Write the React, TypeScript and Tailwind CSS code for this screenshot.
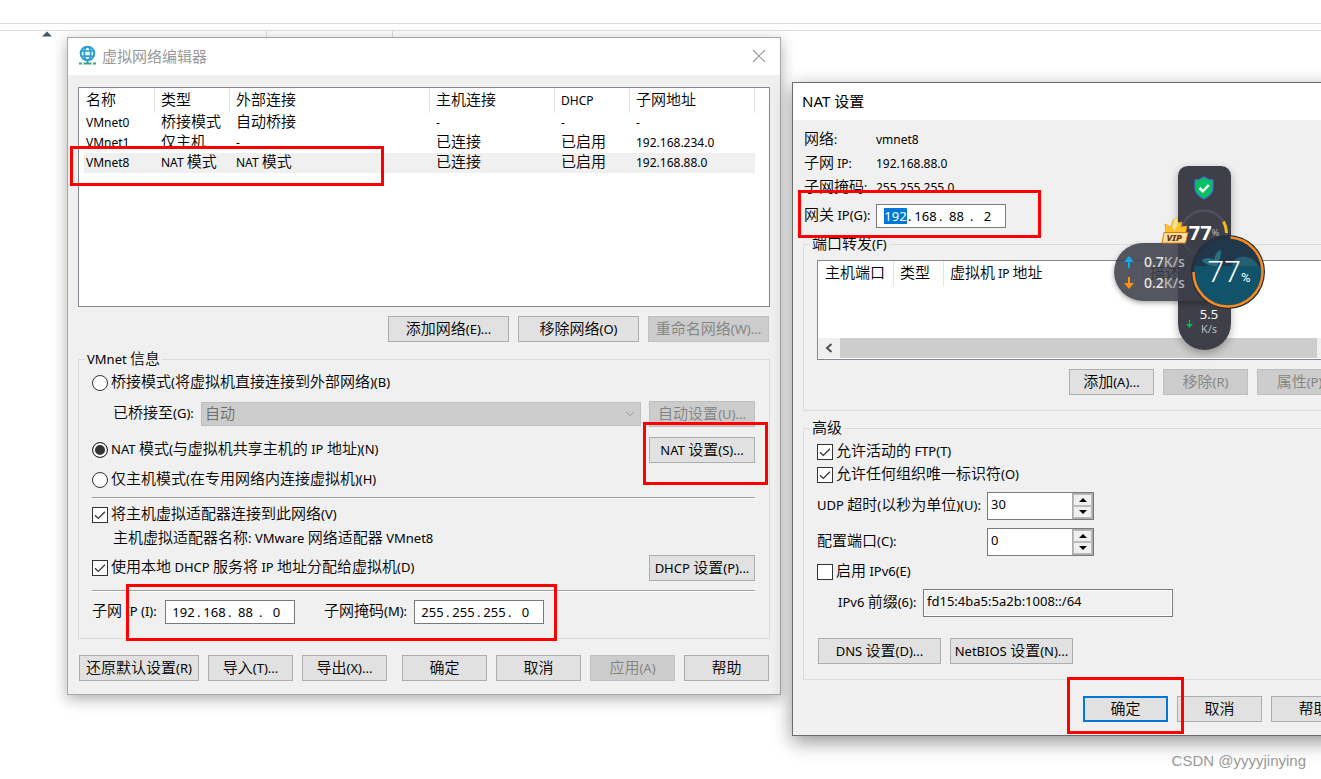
import { useState } from 'react';
import type { ReactNode } from 'react';

import clsx from 'clsx';
import { ChevronDown } from 'lucide-react';

const FONT = "font-['Noto_Sans','Noto_Sans_CJK_SC',sans-serif]";

/** Chinese runs are drawn larger and lighter than the latin text around them. */
function Txt({ children }: { children: string }) {
	return (
		<span className="whitespace-pre">
			{children.split(/([\u4e00-\u9fff]+)/).map((part, i) =>
				i % 2 === 1 ? (
					<span key={i} className="font-['Noto_Sans_CJK_SC',sans-serif] text-[15px] leading-4 font-[350]">
						{part}
					</span>
				) : (
					part
				)
			)}
		</span>
	);
}

function WinButton({
	children,
	className,
	disabled,
	primary,
}: {
	children: string;
	className?: string;
	disabled?: boolean;
	primary?: boolean;
}) {
	return (
		<button
			type="button"
			disabled={disabled}
			className={clsx(
				'flex h-[26px] shrink-0 items-center justify-center leading-5',
				disabled && 'border border-[#bfbfbf] bg-[#cccccc] text-[#838383]',
				primary && 'border-2 border-[#0078d7] bg-[#e1e1e1]',
				!disabled && !primary && 'border border-[#adadad] bg-[#e1e1e1]',
				className
			)}
		>
			<Txt>{children}</Txt>
		</button>
	);
}

function Radio({ label, checked, onChange }: { label: string; checked: boolean; onChange: () => void }) {
	return (
		<label className="flex items-center gap-[3px]">
			<input
				type="radio"
				name="mode"
				checked={checked}
				onChange={onChange}
				className="h-4 w-4 appearance-none rounded-full border border-[#333] bg-white checked:bg-[#333] checked:shadow-[inset_0_0_0_2px_#fff]"
			/>
			<Txt>{label}</Txt>
		</label>
	);
}

function Check({ label, defaultChecked }: { label: string; defaultChecked?: boolean }) {
	return (
		<label className="flex items-center gap-[3px]">
			<span className="grid h-4 w-4">
				<input
					type="checkbox"
					defaultChecked={defaultChecked}
					className="peer col-start-1 row-start-1 h-4 w-4 appearance-none border border-[#333] bg-white"
				/>
				<svg
					viewBox="0 0 16 16"
					className="pointer-events-none invisible col-start-1 row-start-1 h-4 w-4 peer-checked:visible"
				>
					<path d="M3 8.2 6.3 11.4 13 4.8" fill="none" stroke="#333" strokeWidth="1.3" />
				</svg>
			</span>
			<Txt>{label}</Txt>
		</label>
	);
}

function IpField({ label, parts, selected }: { label: string; parts: string[]; selected?: number }) {
	return (
		<div role="group" aria-label={label} className="flex h-6 w-[130px] shrink-0 items-center border border-[#7a7a7a] bg-white pl-1">
			{parts.map((part, i) => (
				<span key={i} className="flex items-center">
					<input
						type="text"
						aria-label={`${label} ${i + 1}`}
						defaultValue={part}
						className={clsx(
							'h-4 text-center text-[13px] leading-4',
							selected === i ? 'mr-px ml-[3px] w-[23px] bg-[#0078d7] text-white' : 'w-[27px]'
						)}
					/>
					{i < 3 && <span className="w-1 leading-4">.</span>}
				</span>
			))}
		</div>
	);
}

function Spinner({ id, value }: { id: string; value: number }) {
	const [current, setCurrent] = useState(value);

	return (
		<div className="flex h-7 w-[107px] border border-[#7a7a7a] bg-white">
			<input
				id={id}
				type="text"
				value={current}
				onChange={(e) => setCurrent(Number(e.target.value) || 0)}
				className="h-[22px] w-[84px] pl-[3px] leading-5"
			/>
			<div className="flex w-[21px] flex-col border border-[#adadad] bg-[#f0f0f0]">
				<button
					type="button"
					aria-label="增加"
					onClick={() => setCurrent(current + 1)}
					className="flex h-3 items-center justify-center border border-[#bbb]"
				>
					<svg viewBox="0 0 8 4" className="h-1 w-2">
						<path d="M0 4 4 0l4 4z" />
					</svg>
				</button>
				<button
					type="button"
					aria-label="减少"
					onClick={() => setCurrent(current - 1)}
					className="flex h-3 items-center justify-center border border-[#bbb]"
				>
					<svg viewBox="0 0 8 4" className="h-1 w-2">
						<path d="M0 0 4 4l4-4z" />
					</svg>
				</button>
			</div>
		</div>
	);
}

function Divider({ className }: { className: string }) {
	return <hr className={clsx('mr-px h-[2px] border-0 border-t border-[#a0a0a0] bg-white', className)} />;
}

function Group({ title, className, children }: { title: string; className: string; children: ReactNode }) {
	return (
		<fieldset className={clsx('border border-[#dcdcdc] px-[13px]', className)}>
			<legend className="-ml-[7px] h-5 px-[2px] leading-5">
				<Txt>{title}</Txt>
			</legend>
			{children}
		</fieldset>
	);
}

const NETWORKS = [
	['VMnet0', '桥接模式', '自动桥接', '-', '-', '-'],
	['VMnet1', '仅主机', '-', '已连接', '已启用', '192.168.234.0'],
	['VMnet8', 'NAT 模式', 'NAT 模式', '已连接', '已启用', '192.168.88.0'],
];

function NetworkTable() {
	return (
		<div className="h-[220px] border border-[#828790] bg-white">
			<table className="w-full table-fixed border-separate border-spacing-0 text-left text-xs leading-5">
				<colgroup>
					<col className="w-[76px]" />
					<col className="w-[75px]" />
					<col className="w-[200px]" />
					<col className="w-[125px]" />
					<col className="w-[75px]" />
					<col className="w-[125px]" />
					<col />
				</colgroup>
				<thead>
					<tr>
						{['名称', '类型', '外部连接', '主机连接', 'DHCP', '子网地址'].map((head, i) => (
							<th
								key={head}
								className={clsx(
									'h-[25px] border-r border-[#e5e5e5] p-0 font-normal',
									i === 0 ? 'pl-[7px]' : 'pl-[6px]'
								)}
							>
								<Txt>{head}</Txt>
							</th>
						))}
						<td />
					</tr>
				</thead>
				<tbody>
					{NETWORKS.map((row) => (
						<tr key={row[0]}>
							{row.map((cell, i) => (
								<td
									key={i}
									className={clsx(
										'h-5 p-0',
										i === 0 ? 'border-l-[5px] border-white pl-[2px]' : 'pl-[6px]',
										row[0] === 'VMnet8' && 'bg-[#f0f0f0]'
									)}
								>
									<div className="h-5 leading-5">
										<Txt>{cell}</Txt>
									</div>
								</td>
							))}
							<td />
						</tr>
					))}
				</tbody>
			</table>
		</div>
	);
}

function GlobeIcon() {
	return (
		<svg viewBox="0 0 17 20" className="h-5 w-[17px]" fill="none">
			<circle cx="8.5" cy="7.5" r="6.8" fill="#eaf7fd" stroke="#2a9fd0" strokeWidth="2" />
			<ellipse cx="8.5" cy="7.5" rx="3.2" ry="6.8" stroke="#2a9fd0" strokeWidth="1.6" />
			<path d="M1.8 5h13.4M1.8 10.2h13.4" stroke="#2a9fd0" strokeWidth="1.7" />
			<path d="M8.5 14.5v3" stroke="#2a9fd0" strokeWidth="2" />
			<path d="M0 17.5h3M4.5 17.5h8M14 17.5h3" stroke="#3aa58c" strokeWidth="2" />
		</svg>
	);
}

function NetworkEditor() {
	const [mode, setMode] = useState('nat');

	return (
		<section className="absolute top-[37px] left-[67px] w-[714px] border border-[#a8a8a8] bg-[#f0f0f0] shadow-[0_4px_14px_rgba(0,0,0,0.32)]">
			<header className="flex h-[37px] items-center bg-white pr-[14px] pb-px pl-[11px] text-[15px] text-[#999]">
				<GlobeIcon />
				<h1 className="ml-1.5 flex-1 leading-5">虚拟网络编辑器</h1>
				<button type="button" aria-label="关闭">
					<svg viewBox="0 0 14 14" className="h-3.5 w-3.5">
						<path d="M1 1l12 12M13 1 1 13" stroke="#999" strokeWidth="1.1" />
					</svg>
				</button>
			</header>

			<div className="px-[10px] pt-3 pb-[13px]">
				<NetworkTable />

				<div className="mt-[9px] flex justify-end gap-[9px] pr-px">
					<WinButton className="w-[121px]">添加网络(E)...</WinButton>
					<WinButton className="w-[121px]">移除网络(O)</WinButton>
					<WinButton className="w-[121px]" disabled>
						重命名网络(W)...
					</WinButton>
				</div>

				<Group title="VMnet 信息" className="mt-[7px] pb-[14px]">
					<div className="mt-px flex h-[26px] items-center">
						<Radio label="桥接模式(将虚拟机直接连接到外部网络)(B)" checked={mode === 'bridge'} onChange={() => setMode('bridge')} />
					</div>
					<div className="mt-[5px] flex h-[26px] items-center pl-[21px]">
						<label htmlFor="bridge" className="w-[88px]">
							<Txt>已桥接至(G):</Txt>
						</label>
						<div className="grid flex-1 items-center">
							<select
								id="bridge"
								disabled
								className="col-start-1 row-start-1 h-6 appearance-none border border-[#bfbfbf] bg-[#cccccc] pb-[2px] pl-[3px] text-[15px] leading-5 font-[350] text-[#6d6d6d] opacity-100"
							>
								<option>自动</option>
							</select>
							<ChevronDown
								className="pointer-events-none col-start-1 row-start-1 mr-1 h-3.5 w-3.5 justify-self-end text-[#999]"
								strokeWidth={1.7}
							/>
						</div>
						<WinButton className="mr-px ml-2 w-[106px]" disabled>
							自动设置(U)...
						</WinButton>
					</div>
					<div className="mt-[10px] flex h-[26px] items-center justify-between pr-px">
						<Radio label="NAT 模式(与虚拟机共享主机的 IP 地址)(N)" checked={mode === 'nat'} onChange={() => setMode('nat')} />
						<WinButton className="w-[106px]">NAT 设置(S)...</WinButton>
					</div>
					<div className="mt-[7px] flex h-5 items-center">
						<Radio label="仅主机模式(在专用网络内连接虚拟机)(H)" checked={mode === 'host'} onChange={() => setMode('host')} />
					</div>

					<Divider className="mt-[7px]" />

					<div className="mt-[6px] flex h-5 items-center">
						<Check label="将主机虚拟适配器连接到此网络(V)" defaultChecked />
					</div>
					<p className="mt-[3px] h-5 pl-[21px] leading-5">
						<Txt>主机虚拟适配器名称: VMware 网络适配器 VMnet8</Txt>
					</p>
					<div className="mt-[7px] flex h-[26px] items-center justify-between pr-px">
						<Check label="使用本地 DHCP 服务将 IP 地址分配给虚拟机(D)" defaultChecked />
						<WinButton className="w-[106px]">DHCP 设置(P)...</WinButton>
					</div>

					<Divider className="mt-[9px]" />

					<div className="mt-2 flex h-6 items-center">
						<span className="w-[73px]">
							<Txt>子网 IP (I):</Txt>
						</span>
						<IpField label="子网 IP" parts={['192', '168', '88', '0']} />
						<span className="ml-[29px] w-[90px]">
							<Txt>子网掩码(M):</Txt>
						</span>
						<IpField label="子网掩码" parts={['255', '255', '255', '0']} />
					</div>
				</Group>

				<div className="mt-4 flex gap-[9px] px-px">
					<WinButton className="w-[120px]">还原默认设置(R)</WinButton>
					<WinButton className="w-[85px]">导入(T)...</WinButton>
					<WinButton className="w-[85px]">导出(X)...</WinButton>
					<WinButton className="ml-auto w-[85px]">确定</WinButton>
					<WinButton className="w-[85px]">取消</WinButton>
					<WinButton className="w-[85px]" disabled>
						应用(A)
					</WinButton>
					<WinButton className="w-[85px]">帮助</WinButton>
				</div>
			</div>
		</section>
	);
}

function NatSettings() {
	return (
		<section className="absolute top-[82px] left-[792px] w-[577px] border border-[#6b6b6b] bg-[#f0f0f0] shadow-[0_6px_18px_rgba(0,0,0,0.42)]">
			<header className="flex h-[37px] items-center bg-white pb-[2px] pl-[9px]">
				<h2 className="text-[15px] leading-5">NAT 设置</h2>
			</header>

			<div className="px-[10px] pt-2 pb-[13px]">
				<dl className="grid grid-cols-[72px_1fr] pl-px text-xs leading-6">
					{[
						['网络:', 'vmnet8'],
						['子网 IP:', '192.168.88.0'],
						['子网掩码:', '255.255.255.0'],
					].map(([name, value]) => (
						<div key={name} className="col-span-2 grid h-6 grid-cols-subgrid">
							<dt>
								<Txt>{name}</Txt>
							</dt>
							<dd>{value}</dd>
						</div>
					))}
				</dl>
				<div className="mt-1 flex h-6 items-center pl-px">
					<span className="w-[72px]">
						<Txt>网关 IP(G):</Txt>
					</span>
					<IpField label="网关 IP" parts={['192', '168', '88', '2']} selected={0} />
				</div>

				<Group title="端口转发(F)" className="mt-[6px] pb-[15px]">
					<div className="mt-[6px] flex h-[100px] flex-col justify-between border border-[#828790] bg-white">
						<table className="w-full table-fixed border-separate border-spacing-0 text-left text-xs leading-5">
							<colgroup>
								<col className="w-[76px]" />
								<col className="w-[50px]" />
								<col className="w-[200px]" />
								<col />
							</colgroup>
							<thead>
								<tr>
									{['主机端口', '类型', '虚拟机 IP 地址', '描述'].map((head, i) => (
										<th
											key={head}
											className={clsx(
												'h-[25px] border-r border-[#e5e5e5] p-0 font-normal',
												i === 0 ? 'pl-[7px]' : 'pl-[6px]'
											)}
										>
											<Txt>{head}</Txt>
										</th>
									))}
								</tr>
							</thead>
						</table>
						<div className="mb-px flex h-[20px] bg-[#f0f0f0]">
							<button type="button" aria-label="向左滚动" className="flex w-[22px] items-center justify-center">
								<svg viewBox="0 0 8 10" className="h-2.5 w-2">
									<path d="M6.5 1 2 5l4.5 4" fill="none" stroke="#505050" strokeWidth="2" />
								</svg>
							</button>
							<div className="w-[477px] bg-[#cdcdcd]" />
						</div>
					</div>

					<div className="mt-[9px] flex justify-end gap-[9px] pr-[2px]">
						<WinButton className="w-[85px]">添加(A)...</WinButton>
						<WinButton className="w-[85px]" disabled>
							移除(R)
						</WinButton>
						<WinButton className="w-[85px]" disabled>
							属性(P)
						</WinButton>
					</div>
				</Group>

				<Group title="高级" className="mt-[7px] pb-[15px]">
					<div className="mt-1 flex h-5 items-center">
						<Check label="允许活动的 FTP(T)" defaultChecked />
					</div>
					<div className="mt-[3px] flex h-5 items-center">
						<Check label="允许任何组织唯一标识符(O)" defaultChecked />
					</div>
					<div className="mt-[7px] flex h-7 items-center">
						<label htmlFor="udp" className="w-[170px]">
							<Txt>UDP 超时(以秒为单位)(U):</Txt>
						</label>
						<Spinner id="udp" value={30} />
					</div>
					<div className="mt-2 flex h-7 items-center">
						<label htmlFor="port" className="w-[170px]">
							<Txt>配置端口(C):</Txt>
						</label>
						<Spinner id="port" value={0} />
					</div>
					<div className="mt-[6px] flex h-5 items-center">
						<Check label="启用 IPv6(E)" />
					</div>
					<div className="mt-[7px] flex h-7 items-center pl-[21px]">
						<label htmlFor="prefix" className="w-[85px]">
							<Txt>IPv6 前缀(6):</Txt>
						</label>
						<input
							id="prefix"
							type="text"
							readOnly
							value="fd15:4ba5:5a2b:1008::/64"
							className="h-7 w-[250px] border border-[#7a7a7a] bg-[#f0f0f0] pb-1 pl-[3px] leading-5 shadow-[inset_0_0_0_1px_#fff]"
						/>
					</div>
					<div className="mt-[21px] flex gap-[9px] pl-px">
						<WinButton className="w-[123px]">DNS 设置(D)...</WinButton>
						<WinButton className="w-[123px]">NetBIOS 设置(N)...</WinButton>
					</div>
				</Group>

				<div className="mt-4 flex justify-end gap-[9px] pr-[2px]">
					<WinButton className="w-[85px]" primary>
						确定
					</WinButton>
					<WinButton className="w-[85px]">取消</WinButton>
					<WinButton className="w-[85px]">帮助</WinButton>
				</div>
			</div>
		</section>
	);
}

function Arrow({ className, down }: { className: string; down?: boolean }) {
	return (
		<svg viewBox="0 0 10 12" className={className} fill="currentColor">
			{down ? <path d="M4 0h2v6h4L5 12 0 6h4z" /> : <path d="M4 12h2V6h4L5 0 0 6h4z" />}
		</svg>
	);
}

function SpeedWidgets() {
	return (
		<>
			<aside className="absolute top-[166px] left-[1178px] flex h-[184px] w-[53px] flex-col items-center rounded-t-[10px] rounded-b-[27px] bg-[#393943]/97 pt-[10px] pr-px text-white shadow-[0_3px_8px_rgba(0,0,0,0.3)]">
				<svg viewBox="0 0 22 24" className="h-6 w-[22px]">
					<path
						d="M11 1c3 2 6 3 9 3v8c0 5-4 8.5-9 11-5-2.5-9-6-9-11V4c3 0 6-1 9-3z"
						fill="#08c160"
						stroke="#3d6fd8"
						strokeWidth="1.3"
					/>
					<path d="M6.5 12l3.3 3.3 6-6.3" fill="none" stroke="#fff" strokeWidth="2.5" />
				</svg>
				<div className="mt-[9px] grid h-12 w-12 place-items-center">
					<svg viewBox="0 0 48 48" className="col-start-1 row-start-1 h-12 w-12" fill="none">
						<circle cx="24" cy="24" r="22.5" stroke="#50505c" strokeWidth="2.5" />
						<path d="M43.5 12.5a22.5 22.5 0 0 1 3 11.5" stroke="#f5b820" strokeWidth="3" />
						<path d="M2 30a22.5 22.5 0 0 0 9 12" stroke="#3d8a72" strokeWidth="2.5" />
					</svg>
					<p className="col-start-1 row-start-1 flex items-center text-xl leading-6 font-bold">
						77<span className="text-[9px] font-normal text-[#bbb]">%</span>
					</p>
				</div>
				<div className="mt-auto mb-[14px] flex items-end gap-[7px] pr-1 font-['Noto_Sans',sans-serif]">
					<Arrow className="mb-2 h-2 w-[7px] text-[#12b55c]" down />
					<p className="text-center text-[13px] leading-[14px]">
						5.5
						<br />
						<span className="text-[11px] text-[#bbb]">K/s</span>
					</p>
				</div>
			</aside>

			<aside className="absolute top-[243px] left-[1114px] flex h-[58px] w-[114px] flex-col justify-center rounded-l-full bg-[#3c4049]/88 pl-[10px] text-[14px] leading-[21px] text-[#e4e4e4] shadow-[0_2px_5px_rgba(0,0,0,0.35)]">
				<p className="flex items-center gap-[10px]">
					<Arrow className="h-3 w-[10px] text-[#14a4f0]" />
					<span className="font-medium">
						0.7<span className="text-[#b5b5b8]">K/s</span>
					</span>
				</p>
				<p className="flex items-center gap-[10px]">
					<Arrow className="h-3 w-[10px] text-[#ff9310]" down />
					<span className="font-medium">
						0.2<span className="text-[#b5b5b8]">K/s</span>
					</span>
				</p>
			</aside>

			<svg viewBox="0 0 28 30" className="absolute top-[216px] left-[1161px] h-[30px] w-7">
				<path d="M4 8l6 3 2-7 4-2 1 5 4-1-1 5 6-1-2 9-19 1z" fill="#ffc02a" stroke="#e8982a" strokeWidth=".8" />
				<path d="M13 4l3-2 1 5-3 8-3-4z" fill="#ffe58a" />
				<path d="M3 16.5h24l-2.5 10.5H1z" fill="#ffdf9c" stroke="#d87a1c" strokeWidth="1" />
				<text x="5.5" y="25.3" fontSize="9.5" fontWeight="800" fontStyle="italic" fill="#6b3208">
					VIP
				</text>
			</svg>

			<div className="absolute top-[234px] left-[1190px] grid h-[76px] w-[76px] place-items-center">
				<svg viewBox="0 0 76 76" className="col-start-1 row-start-1 h-[76px] w-[76px]" fill="none">
					<circle cx="38" cy="38" r="37" fill="#26303e" />
					<circle cx="38" cy="38" r="34" fill="#21384c" />
					<path d="M12 26c5-3 9-2 12 0 1-5 3-9 7-10 0 5 0 9-3 12 1 2 0 4-1 4-6 0-12-1-15-6z" fill="#28707f" />
					<path d="M42 32c2-9 9-10 14-9 7 1 11 5 12 9z" fill="#255f70" />
					<path d="M4.5 32h67a34 34 0 1 1-67 0z" fill="#12536c" />
					<path d="M40.5 3.5a34.5 34.5 0 1 1-37 34.5" stroke="#ff8a1c" strokeWidth="2.5" />
				</svg>
				<p className="col-start-1 row-start-1 flex items-baseline pt-[6px] pl-[2px] font-['Roboto',sans-serif] text-[30px] leading-9 font-light text-white">
					77<span className="text-[13px] font-normal">%</span>
				</p>
			</div>
		</>
	);
}

export default function App() {
	return (
		<div className={clsx('relative min-h-screen overflow-hidden bg-white text-[13px] text-black', FONT)}>
			<div className="mt-[23px] h-2 border-y border-[#dedede]" />
			<div className="flex h-[7px]">
				<svg viewBox="0 0 10 6" className="ml-[42px] h-1.5 w-2.5">
					<path d="M0 5.5 5 .5l5 5z" fill="#445865" />
				</svg>
				<div className="ml-[214px] w-[127px] border-x border-[#dedede]" />
			</div>

			<NetworkEditor />
			<NatSettings />
			<SpeedWidgets />

			<div className="pointer-events-none absolute top-[146px] left-[70px] h-[40px] w-[314px] border-3 border-[#ff0000]" />
			<div className="pointer-events-none absolute top-[422px] left-[643px] h-[63px] w-[125px] border-3 border-[#ff0000]" />
			<div className="pointer-events-none absolute top-[584px] left-[126px] h-[57px] w-[431px] border-3 border-[#ff0000]" />
			<div className="pointer-events-none absolute top-[190px] left-[798px] h-[48px] w-[243px] border-3 border-[#ff0000]" />
			<div className="pointer-events-none absolute top-[677px] left-[1067px] h-[57px] w-[117px] border-3 border-[#ff0000]" />

			<p className="absolute right-[15px] bottom-2 font-['Liberation_Sans',sans-serif] text-[15px] leading-5 text-[#999]">
				CSDN @yyyyjinying
			</p>
		</div>
	);
}
